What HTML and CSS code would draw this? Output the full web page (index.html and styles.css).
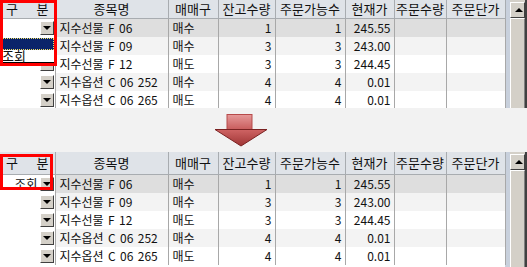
FILE: index.html
```html
<!DOCTYPE html>
<html lang="ko">
<head>
  <meta charset="UTF-8">
  <title>구분 조회</title>
  <link rel="stylesheet" href="styles.css">
</head>
<body>
  <div class="grid top">
    <div class="sheet">
      <table>
        <colgroup>
          <col class="c1"><col class="c2"><col class="c3"><col class="c4">
          <col class="c5"><col class="c6"><col class="c7"><col class="c8">
        </colgroup>
        <thead>
          <tr>
            <th><div class="gubun"><span>구</span><span>분</span></div></th>
            <th>종목명</th><th>매매구</th><th>잔고수량</th><th>주문가능수</th>
            <th>현재가</th><th>주문수량</th><th>주문단가</th>
          </tr>
        </thead>
        <tbody>
          <tr class="sel">
            <td class="combo open"><span class="btn"></span></td>
            <td>지수선물 F 06</td><td>매수</td><td class="num">1</td><td class="num">1</td>
            <td class="num">245.55</td><td></td><td></td>
          </tr>
          <tr class="alt">
            <td class="combo"><span class="btn"></span></td>
            <td>지수선물 F 09</td><td>매수</td><td class="num">3</td><td class="num">3</td>
            <td class="num">243.00</td><td></td><td></td>
          </tr>
          <tr>
            <td class="combo"><span class="btn"></span></td>
            <td>지수선물 F 12</td><td>매도</td><td class="num">3</td><td class="num">3</td>
            <td class="num">244.45</td><td></td><td></td>
          </tr>
          <tr class="alt">
            <td class="combo"><span class="btn"></span></td>
            <td>지수옵션 C 06 252</td><td>매수</td><td class="num">4</td><td class="num">4</td>
            <td class="num">0.01</td><td></td><td></td>
          </tr>
          <tr>
            <td class="combo"><span class="btn"></span></td>
            <td>지수옵션 C 06 265</td><td>매도</td><td class="num">4</td><td class="num">4</td>
            <td class="num">0.01</td><td></td><td></td>
          </tr>
        </tbody>
      </table>
      <div class="droplist">
        <div class="opt hi"></div>
        <div class="opt">조회</div>
      </div>
      <div class="mark mark-top"></div>
    </div>
    <div class="vscroll">
      <div class="up"></div>
      <div class="thumb"></div>
    </div>
  </div>

  <div class="gap">
    <svg class="arrow" width="54" height="33" viewBox="0 0 54 33">
      <defs>
        <linearGradient id="shaft" x1="0" y1="0" x2="0" y2="1">
          <stop offset="0" stop-color="#e69a9a"/>
          <stop offset="1" stop-color="#c85c5c"/>
        </linearGradient>
        <linearGradient id="head" x1="0" y1="0" x2="0" y2="1">
          <stop offset="0" stop-color="#cf6464"/>
          <stop offset="1" stop-color="#9e3434"/>
        </linearGradient>
      </defs>
      <rect x="13" y="0.5" width="25" height="15" fill="url(#shaft)" stroke="#b64a4a"/>
      <polygon points="1,15.5 53,15.5 27,32" fill="url(#head)" stroke="#7a2222"/>
    </svg>
  </div>

  <div class="grid bottom">
    <div class="sheet">
      <table>
        <colgroup>
          <col class="c1"><col class="c2"><col class="c3"><col class="c4">
          <col class="c5"><col class="c6"><col class="c7"><col class="c8">
        </colgroup>
        <thead>
          <tr>
            <th><div class="gubun"><span>구</span><span>분</span></div></th>
            <th>종목명</th><th>매매구</th><th>잔고수량</th><th>주문가능수</th>
            <th>현재가</th><th>주문수량</th><th>주문단가</th>
          </tr>
        </thead>
        <tbody>
          <tr class="sel">
            <td class="combo"><span class="val">조회</span><span class="btn"></span></td>
            <td>지수선물 F 06</td><td>매수</td><td class="num">1</td><td class="num">1</td>
            <td class="num">245.55</td><td></td><td></td>
          </tr>
          <tr class="alt">
            <td class="combo"><span class="btn"></span></td>
            <td>지수선물 F 09</td><td>매수</td><td class="num">3</td><td class="num">3</td>
            <td class="num">243.00</td><td></td><td></td>
          </tr>
          <tr>
            <td class="combo"><span class="btn"></span></td>
            <td>지수선물 F 12</td><td>매도</td><td class="num">3</td><td class="num">3</td>
            <td class="num">244.45</td><td></td><td></td>
          </tr>
          <tr class="alt">
            <td class="combo"><span class="btn"></span></td>
            <td>지수옵션 C 06 252</td><td>매수</td><td class="num">4</td><td class="num">4</td>
            <td class="num">0.01</td><td></td><td></td>
          </tr>
          <tr>
            <td class="combo"><span class="btn"></span></td>
            <td>지수옵션 C 06 265</td><td>매도</td><td class="num">4</td><td class="num">4</td>
            <td class="num">0.01</td><td></td><td></td>
          </tr>
        </tbody>
      </table>
      <div class="mark mark-bottom"></div>
    </div>
    <div class="vscroll">
      <div class="up"></div>
      <div class="thumb"></div>
    </div>
  </div>
</body>
</html>
```

FILE: styles.css
```css
body {
  margin: 0;
  background: #f2f2f2;
  font-family: "Noto Sans CJK KR", "Noto Sans", sans-serif;
  font-size: 12px;
  color: #111;
  width: 527px;
  height: 267px;
  overflow: hidden;
}
.grid {
  display: flex;
  background: #fff;
}
.grid.top {
  height: 108px;
  overflow: hidden;
}
.grid.bottom {
  height: 115px;
  overflow: hidden;
}
.sheet {
  position: relative;
  width: 505px;
  border-right: 5px solid #c8d0dc;
  background: #fff;
}
table {
  border-collapse: collapse;
  table-layout: fixed;
  width: 505px;
}
col.c1 { width: 55px; }
col.c2 { width: 113px; }
col.c3 { width: 50px; }
col.c4 { width: 57px; }
col.c5 { width: 70px; }
col.c6 { width: 49px; }
col.c7 { width: 52px; }
col.c8 { width: 59px; }
th {
  background: #dfe3e8;
  font-weight: normal;
  font-size: 13px;
  height: 18px;
  padding: 0;
  line-height: 18px;
  border-right: 1px solid #a8acb0;
  border-bottom: 1px solid #a8acb0;
  white-space: nowrap;
  overflow: hidden;
}
.bottom th {
  height: 22px;
  line-height: 22px;
}
.gubun {
  display: flex;
  justify-content: space-between;
  padding: 0 6px 0 6px;
}
td {
  height: 18px;
  padding: 0 3px 0 4px;
  line-height: 18px;
  border-right: 1px solid #a8a8a8;
  white-space: nowrap;
  overflow: hidden;
  font-size: 12px;
  word-spacing: 1px;
}
td.num {
  text-align: right;
}
tr.sel td {
  background: #dedede;
}
tr.alt td {
  background: #f3f3f3;
}
td.combo {
  background: #fff !important;
  padding: 0 1px 0 0;
  text-align: right;
}
.val {
  display: inline-block;
  vertical-align: top;
  margin-right: 2px;
  font-size: 12.5px;
}
.btn {
  display: inline-block;
  vertical-align: top;
  margin-top: 2px;
  width: 12px;
  height: 12px;
  background: #d4d0c8;
  border: 1px solid;
  border-color: #fff #404040 #404040 #fff;
  position: relative;
}
.btn::after {
  content: "";
  position: absolute;
  left: 2px;
  top: 4px;
  border-left: 4px solid transparent;
  border-right: 4px solid transparent;
  border-top: 4px solid #000;
}
.droplist {
  position: absolute;
  left: 0;
  top: 38px;
  width: 54px;
  background: #fff;
  border-bottom: 1px solid #000;
}
.opt {
  height: 12px;
  line-height: 12px;
  padding-left: 2px;
  font-size: 13px;
}
.opt.hi {
  background: #0a246a;
  outline: 1px dotted #f0e060;
  outline-offset: -1px;
}
.mark {
  position: absolute;
  border: 3px solid #f00;
  box-sizing: border-box;
}
.mark-top {
  left: 0;
  top: 0;
  width: 57px;
  height: 66px;
}
.mark-bottom {
  left: 0;
  top: 2px;
  width: 53px;
  height: 36px;
}
.vscroll {
  width: 17px;
  display: flex;
  flex-direction: column;
  background: #d4d0c8;
  border-right: 2px solid #404040;
}
.up {
  height: 14px;
  margin-top: 2px;
  border: 1px solid;
  border-color: #fff #404040 #404040 #fff;
  position: relative;
}
.up::after {
  content: "";
  position: absolute;
  left: 4px;
  top: 5px;
  border-left: 4px solid transparent;
  border-right: 4px solid transparent;
  border-bottom: 4px solid #000;
}
.thumb {
  flex: 1;
  border-left: 1px solid #fff;
  border-top: 1px solid #fff;
  border-right: 1px solid #808080;
}
.gap {
  height: 44px;
  display: flex;
  align-items: center;
  padding-left: 214px;
}
```
